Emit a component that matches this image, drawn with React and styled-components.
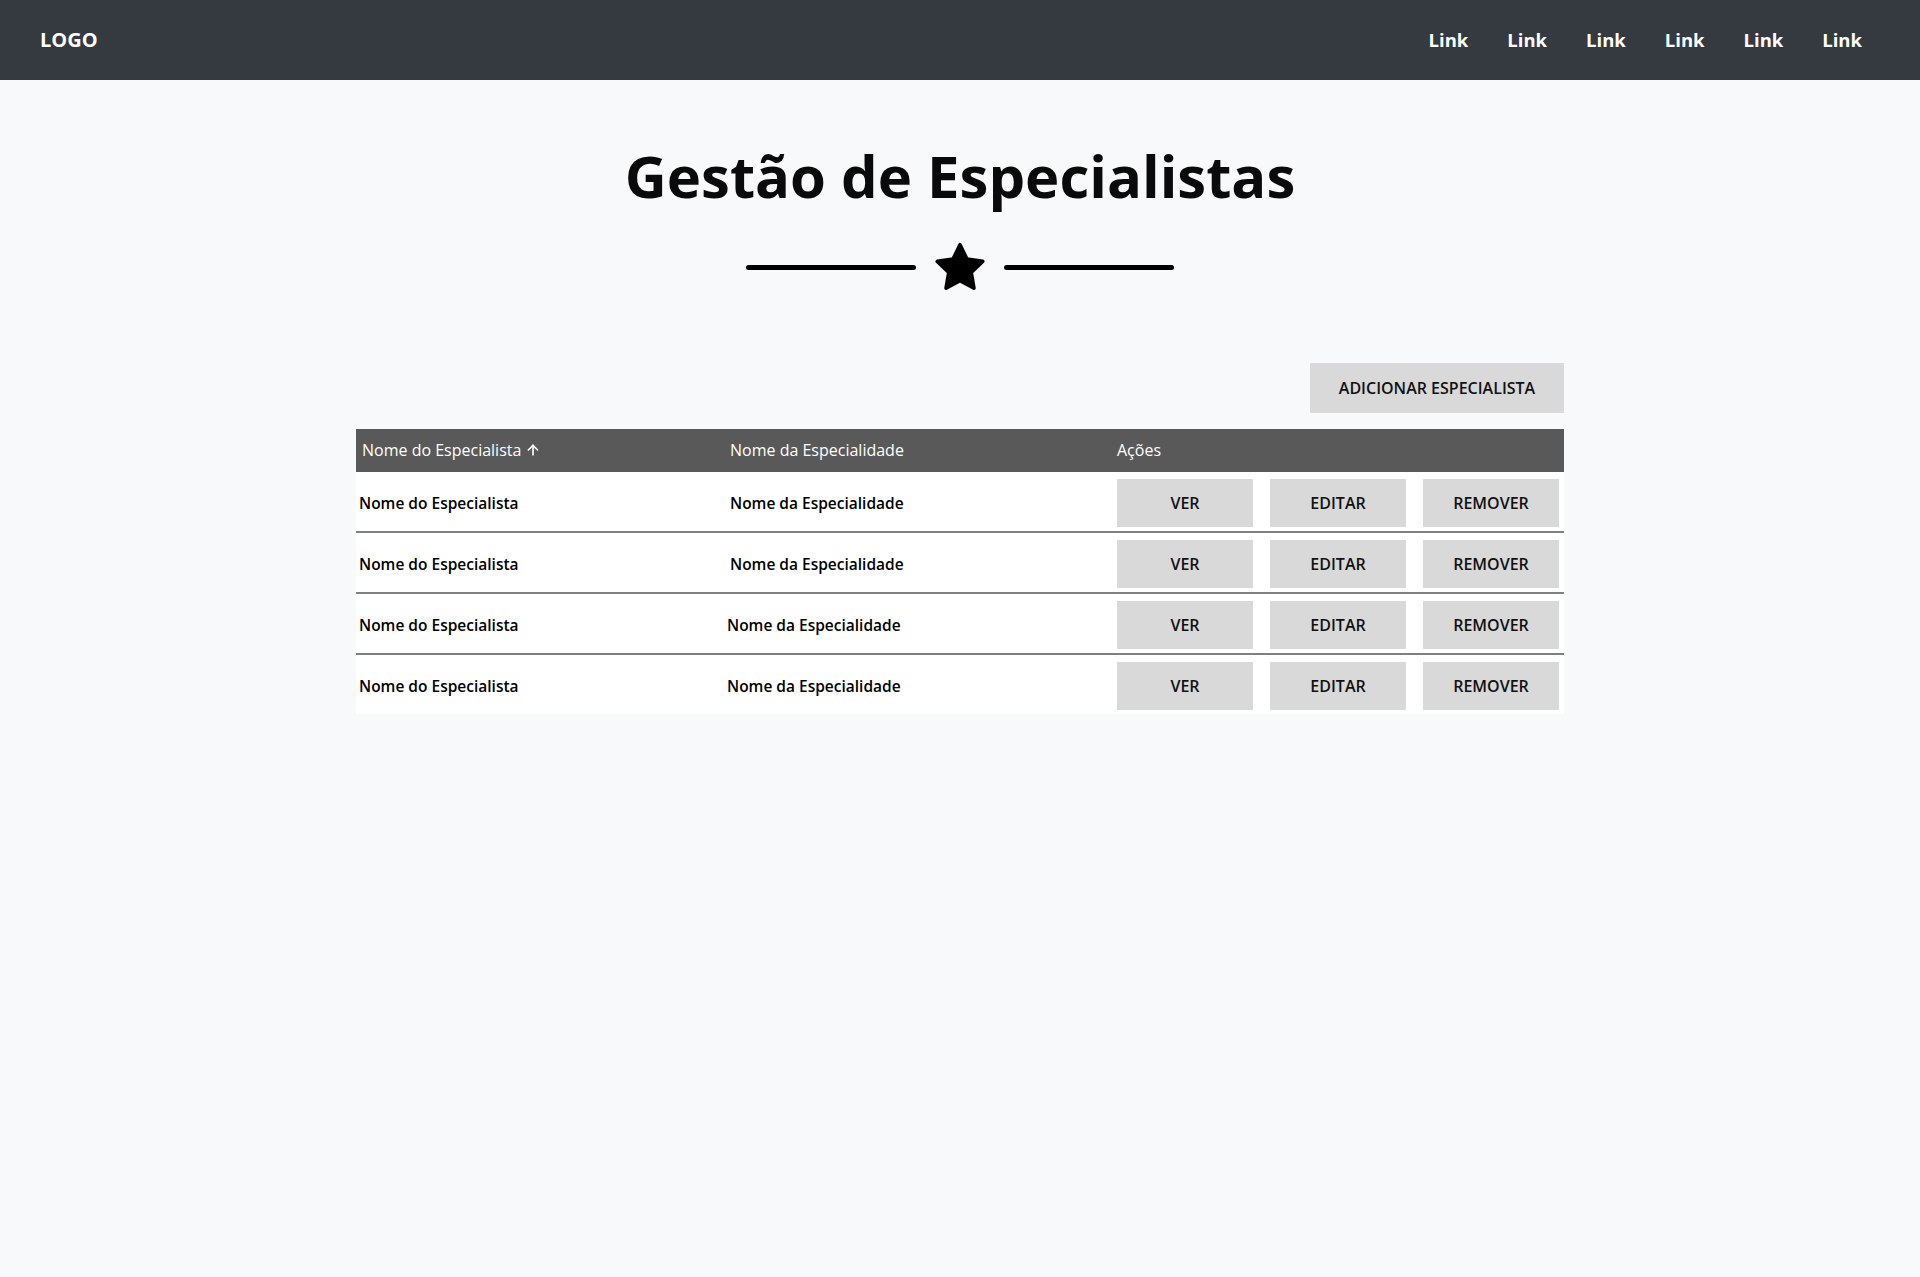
import React from 'react';
import styled, { createGlobalStyle } from 'styled-components';
import { ArrowUp } from 'lucide-react';

const GlobalStyle = createGlobalStyle`
  body {
    margin: 0;
    background: #f8f9fa;
    font-family: "Open Sans", "Noto Sans", sans-serif;
    color: #000;
  }
`;

const Nav = styled.nav`
  height: 80px;
  background: #343a40;
  display: flex;
  align-items: center;
  justify-content: space-between;
  padding: 0 58px 2px 40px;
  box-sizing: border-box;
`;
const Logo = styled.div`
  color: #fff;
  font-size: 20px;
  font-weight: 700;
`;
const NavLinks = styled.div`
  display: flex;
  gap: 39px;
`;
const NavLink = styled.a`
  color: #fff;
  font-size: 18.5px;
  font-weight: 700;
  text-decoration: none;
`;

const Main = styled.main`
  display: flex;
  flex-direction: column;
  align-items: center;
  padding-top: 58px;
`;
const Title = styled.h1`
  margin: 0;
  font-size: 58px;
  line-height: 76px;
  font-weight: 700;
  color: #0a0a0a;
`;
const Divider = styled.div`
  display: flex;
  align-items: center;
  gap: 17px;
  margin-top: 27px;
`;
const Line = styled.div`
  width: 170px;
  height: 5px;
  border-radius: 3px;
  background: #000;
`;

const Section = styled.section`
  width: 1208px;
  margin-top: 70px;
  display: flex;
  flex-direction: column;
`;
const Toolbar = styled.div`
  display: flex;
  justify-content: flex-end;
  margin-bottom: 16px;
`;
const GrayButton = styled.button`
  border: none;
  background: #d9d9d9;
  font-family: inherit;
  font-size: 16px;
  font-weight: 600;
  color: #111;
  height: ${p => p.$h || 48}px;
  width: ${p => p.$w || 136}px;
  padding: 0;
  cursor: pointer;
`;

const Table = styled.div`
  display: flex;
  flex-direction: column;
  background: #fff;
`;
const HeadRow = styled.div`
  display: grid;
  grid-template-columns: 374px 387px 1fr;
  align-items: center;
  height: 43px;
  padding-bottom: 2px;
  box-sizing: border-box;
  background: #595959;
  color: #fff;
  font-size: 16px;
`;
const HeadCell = styled.div`
  display: flex;
  align-items: center;
  gap: 4px;
  padding-left: ${p => p.$pad || 0}px;
`;
const Row = styled.div`
  display: grid;
  grid-template-columns: 374px 387px 1fr;
  align-items: center;
  padding: 7px 6px 4px 0;
  border-bottom: 2px solid #808080;
  font-size: 15.5px;
  font-weight: 600;
  &:last-child {
    border-bottom: none;
  }
`;
const Cell = styled.div`
  padding-left: ${p => p.$pad || 0}px;
`;
const Actions = styled.div`
  display: grid;
  grid-template-columns: repeat(3, 136px);
  gap: 17px;
`;

const rows = [
  { shift: 0 },
  { shift: 0 },
  { shift: -3 },
  { shift: -3 },
];

function Star() {
  return (
    <svg width="54" height="52" viewBox="0 0 24 23">
      <path
        d="M12 1.6l3.1 6.4 7 1-5.1 4.9 1.2 7-6.2-3.3-6.2 3.3 1.2-7L1.9 9l7-1z"
        fill="#000"
        stroke="#000"
        strokeWidth="1.6"
        strokeLinejoin="round"
      />
    </svg>
  );
}

export default function App() {
  return (
    <>
      <GlobalStyle />
      <Nav>
        <Logo>LOGO</Logo>
        <NavLinks>
          {[0, 1, 2, 3, 4, 5].map(i => <NavLink key={i} href="#">Link</NavLink>)}
        </NavLinks>
      </Nav>
      <Main>
        <Title>Gestão de Especialistas</Title>
        <Divider>
          <Line />
          <Star />
          <Line />
        </Divider>
        <Section>
          <Toolbar>
            <GrayButton $w={254} $h={50}>ADICIONAR ESPECIALISTA</GrayButton>
          </Toolbar>
          <Table>
            <HeadRow>
              <HeadCell $pad={6}>Nome do Especialista <ArrowUp size={16} strokeWidth={2.5} /></HeadCell>
              <HeadCell>Nome da Especialidade</HeadCell>
              <HeadCell>Ações</HeadCell>
            </HeadRow>
            {rows.map((r, i) => (
              <Row key={i}>
                <Cell $pad={3}>Nome do Especialista</Cell>
                <Cell style={{ marginLeft: r.shift }}>Nome da Especialidade</Cell>
                <Actions>
                  <GrayButton>VER</GrayButton>
                  <GrayButton>EDITAR</GrayButton>
                  <GrayButton>REMOVER</GrayButton>
                </Actions>
              </Row>
            ))}
          </Table>
        </Section>
      </Main>
    </>
  );
}
